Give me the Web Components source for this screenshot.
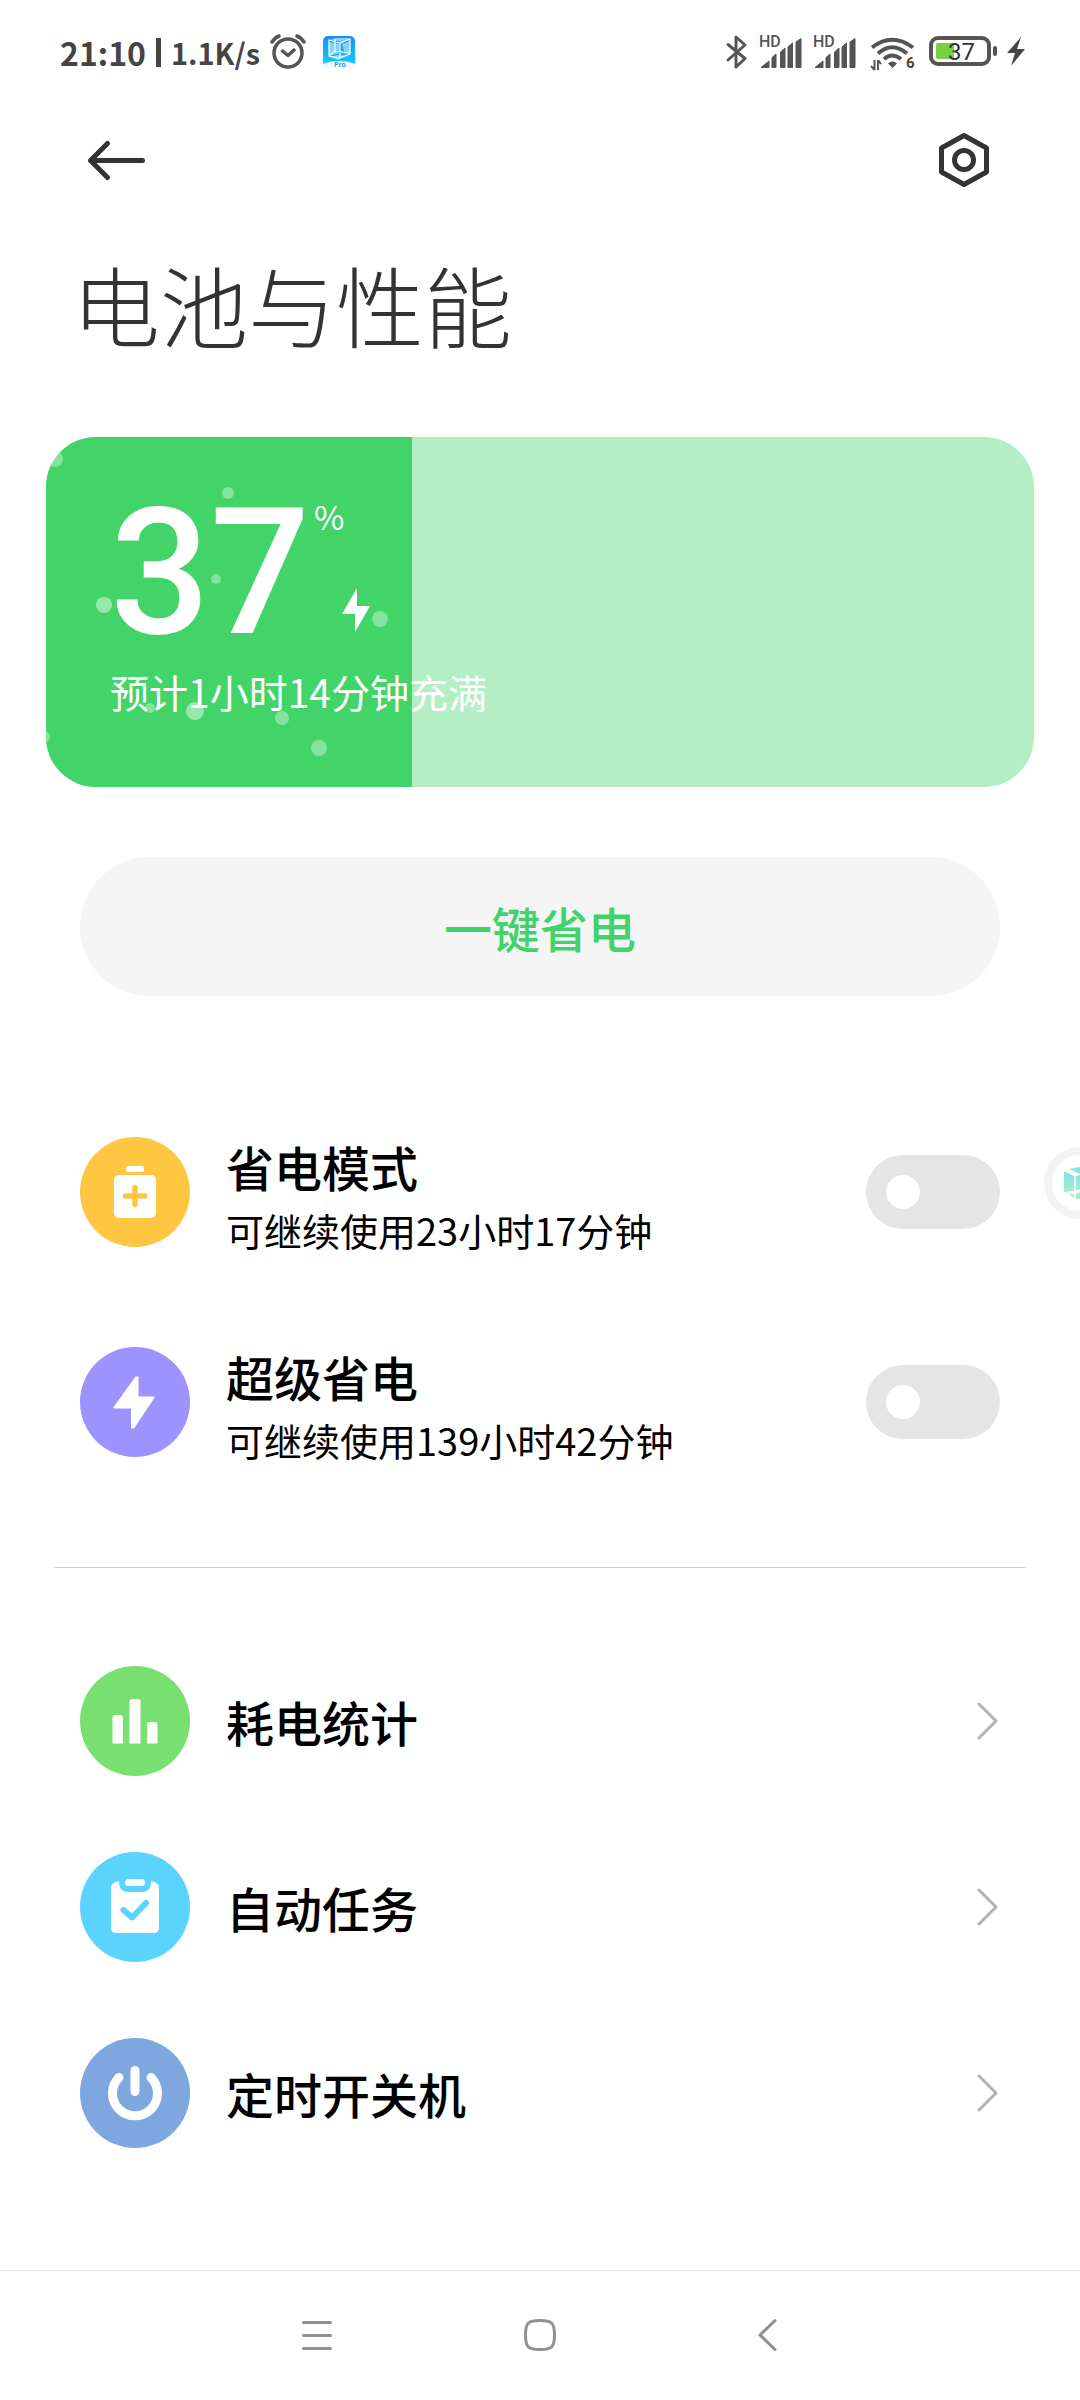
<!DOCTYPE html>
<html lang="zh-CN">
<head>
<meta charset="utf-8">
<meta name="viewport" content="width=device-width, initial-scale=1">
<title>电池与性能</title>
<style>
  html, body { margin: 0; background: #fff; }
  body { font-family: "Noto Sans CJK SC", "Noto Sans", sans-serif; color: #000; }
</style>
</head>
<body>
<battery-page>
  <status-bar slot="status"></status-bar>
  <page-header slot="header">电池与性能</page-header>
  <battery-card level="37">预计1小时14分钟充满</battery-card>
  <power-button>一键省电</power-button>
  <item-group label="省电">
    <switch-row color="#ffc642" icon="battery">省电模式<span slot="note">可继续使用23小时17分钟</span></switch-row>
    <switch-row color="#9d93ff" icon="bolt">超级省电<span slot="note">可继续使用139小时42分钟</span></switch-row>
  </item-group>
  <item-group label="更多" divided>
    <link-row color="#78e070" icon="chart">耗电统计</link-row>
    <link-row color="#5ad3ff" icon="task">自动任务</link-row>
    <link-row color="#7ea6df" icon="power">定时开关机</link-row>
  </item-group>
  <nav-bar slot="nav"></nav-bar>
  <floating-bubble slot="float"></floating-bubble>
</battery-page>

<script>
const define = (name, render) => customElements.define(name, class extends HTMLElement {
  connectedCallback() {
    if (this.shadowRoot) return;
    const template = document.createElement('template');
    template.innerHTML = render(this);
    this.attachShadow({ mode: 'open' }).append(template.content.cloneNode(true));
  }
});

const ICONS = {
  battery: `<rect x="46" y="29" width="18" height="6" rx="2" fill="#fff"/>
    <rect x="34" y="38" width="42" height="43" rx="5" fill="#fff"/>
    <path d="M55 50.500v17M45.500 59h19" stroke="currentColor" stroke-width="5.500" stroke-linecap="round"/>`,
  bolt: `<path d="M57.500 30.500V50.500H73.500L53.500 80.500H52V60.500H34.500L56 30.500Z" fill="#fff" stroke="#fff" stroke-width="2" stroke-linejoin="round"/>`,
  chart: `<path d="M32.500 77.500V52a3 3 0 0 1 3-3h4.500a3 3 0 0 1 3 3v25.500ZM49.500 77.500V36a3 3 0 0 1 3-3h5a3 3 0 0 1 3 3v41.500ZM67 77.500V59a3 3 0 0 1 3-3h4.500a3 3 0 0 1 3 3v18.500Z" fill="#fff"/>`,
  task: `<path d="M39 29.500C39 36 42 40 48 40H62C68 40 71 36 71 29.500C76 29.500 79 32 79 36V76Q79 81 74 81H36Q31 81 31 76V36C31 32 34 29.500 39 29.500Z" fill="#fff"/>
    <rect x="45" y="27" width="20" height="7" rx="3.500" fill="#fff"/>
    <path d="M43.500 58L52 65.500L66 51" fill="none" stroke="currentColor" stroke-width="6" stroke-linecap="round" stroke-linejoin="round"/>`,
  power: `<path d="M39 39.500A22.500 22.500 0 1 0 71 39.500" fill="none" stroke="#fff" stroke-width="9" stroke-linecap="round"/>
    <path d="M55 32.500V53.500" stroke="#fff" stroke-width="9" stroke-linecap="round"/>`
};

define('battery-page', () => `
  <style>
    :host { display: flex; flex-direction: column; min-height: 100vh; position: relative; overflow: hidden; }
    main { flex: 1; display: flex; flex-direction: column; }
  </style>
  <slot name="status"></slot>
  <slot name="header"></slot>
  <main><slot></slot></main>
  <slot name="nav"></slot>
  <slot name="float"></slot>`);

const signal = `<svg width="46" height="40" viewBox="0 0 46 40">
  <text x="0" y="15" class="hd">HD</text>
  <path d="M2 35.500L10 29V35.500ZM13 35.500V25.500L17 22V35.500ZM21.500 35.500V20L26 16V35.500ZM29 35.500V15L33.500 11V35.500ZM37 35.500V10L42 6.500V35.500Z" fill="#555" stroke="#555" stroke-linejoin="round"/></svg>`;

define('status-bar', () => `
  <style>
    :host { display: flex; justify-content: space-between; align-items: center; height: 104px; padding: 0 54px 0 60px; color: #444; font-size: 32px; line-height: 40px; font-weight: 700; }
    div { display: flex; align-items: center; }
    .left { gap: 10px; }
    .right { gap: 8px; }
    .bar { width: 5px; height: 29px; background: #444; }
    .speed { font-size: 29px; }
    .app { margin-left: 6px; }
    svg { display: block; }
    .hd { font: 500 16px Roboto, sans-serif; fill: #555; }
    .six { font: 700 15px Roboto, sans-serif; fill: #444; }
    .num { font: 400 24px Roboto, sans-serif; fill: #333; }
    .pro { font: 700 7px "Open Sans", sans-serif; fill: #2a9cf0; }
  </style>
  <div class="left">
    <time>21:10</time><span class="bar"></span><span class="speed">1.1K/s</span>
    <svg width="36" height="40" viewBox="0 0 36 40" fill="none" stroke="#555" stroke-width="3.500" stroke-linecap="round" stroke-linejoin="round">
      <circle cx="18" cy="21" r="14"/><path d="M12.500 19L18 23.500L24 18M2 10Q5 5.500 9 4M27 4Q31 5.500 34 10"/></svg>
    <svg class="app" width="34" height="34" viewBox="0 0 34 34">
      <defs><linearGradient id="sky" x2="0" y2="1"><stop stop-color="#168cf8"/><stop offset="1" stop-color="#16d6fa"/></linearGradient>
      <clipPath id="tile"><rect x="1" y="1" width="32" height="32" rx="5"/></clipPath></defs>
      <g clip-path="url(#tile)"><rect width="34" height="34" fill="url(#sky)"/>
      <path d="M8 5L14 3H26L28 5L20 7ZM7 7L17 9V18L7 21ZM20 9L28 6V18L23 19ZM8 22L16 20L25 21L16 25Z" fill="#cdf3ff" opacity=".6"/>
      <path d="M7 5L18 8L28 4V19L17 23L7 21ZM18 8V22M13 4V16L8 20M13 16L27 18" fill="none" stroke="#fff" stroke-width="1.200"/>
      <ellipse cx="17" cy="33" rx="19" ry="7" fill="#f2fbff"/></g><text class="pro" x="12" y="32">Pro</text></svg>
  </div>
  <div class="right">
    <svg width="26" height="40" viewBox="0 0 26 40" fill="none" stroke="#555" stroke-width="3" stroke-linejoin="round" stroke-linecap="round"><path d="M3 12.500L20 26.500L11 35V5L20 13L3 28"/></svg>
    ${signal}${signal}
    <svg width="54" height="40" viewBox="0 0 54 40">
      <g fill="none" stroke="#555" stroke-width="4"><path d="M5 15.500Q25 0 46 15.500M11 21.500Q25 9 40 21.500M17 27Q25 20 34 27"/></g>
      <path d="M21 31.500Q25.500 27.500 30 31.500L25.500 36Z" fill="#555"/>
      <path d="M7.500 38V28M4 34L7.500 38M11 28V38M14 32L11 28" fill="none" stroke="#555" stroke-width="2"/>
      <text class="six" x="39" y="36">6</text></svg>
    <svg width="69" height="40" viewBox="0 0 69 40">
      <rect x="2" y="6" width="58" height="26" rx="7" fill="none" stroke="#555" stroke-width="4"/>
      <rect x="7" y="11" width="18" height="16" rx="2" fill="#79d142"/><rect x="64" y="14" width="4" height="10" rx="2" fill="#555"/>
      <text class="num" x="19" y="28">37</text></svg>
    <svg width="20" height="40" viewBox="0 0 20 40"><path d="M15 5L1 21H9L5 34L19 17H11Z" fill="#444"/></svg>
  </div>`);

define('page-header', () => `
  <style>
    :host { display: block; color: #333; }
    div { display: flex; justify-content: space-between; height: 112px; padding: 0 80px; align-items: center; }
    button { border: 0; padding: 0; background: none; color: inherit; display: block; }
    svg { display: block; }
    h1 { margin: 0 72px; padding: 23px 0 65px; font-weight: 300; font-size: 88px; line-height: 128px; }
  </style>
  <div>
    <button aria-label="返回"><svg width="72" height="72" viewBox="0 0 72 72" fill="none" stroke="currentColor" stroke-width="5" stroke-linecap="round" stroke-linejoin="round"><path d="M62.500 36.500H10.500M27.500 19.500L10.500 36.500L27.500 53.500"/></svg></button>
    <button aria-label="设置"><svg width="72" height="72" viewBox="0 0 72 72" fill="none" stroke="currentColor" stroke-width="5" stroke-linejoin="round"><path d="M36 11.500L58.500 24V48L36 60.500L13.500 48V24Z"/><circle cx="36" cy="36" r="9.500"/></svg></button>
  </div>
  <h1><slot></slot></h1>`);

define('battery-card', el => `
  <style>
    :host { display: block; position: relative; box-sizing: border-box; height: 350px; margin: 5px 46px 0; padding: 0 64px; border-radius: 50px; background: #b3eec5; color: #fff; overflow: hidden; }
    .fill { position: absolute; inset: 0 auto 0 0; width: ${el.getAttribute('level')}%; background: #42d469; overflow: hidden; }
    .fill svg { display: block; }
    .content { position: relative; }
    .level { display: flex; padding-top: 36px; height: 190px; }
    strong { font: 500 176px/200px Roboto, sans-serif; }
    .side { display: flex; flex-direction: column; justify-content: space-between; margin-left: 4px; padding: 18px 0 31px; box-sizing: border-box; }
    .side span { font-size: 33px; line-height: 50px; }
    .side svg { display: block; margin-left: 28px; }
    p { margin: 0; font-size: 39px; line-height: 56px; }
  </style>
  <div class="fill"><svg width="366" height="350" viewBox="0 0 366 350" fill="#fff">
    <g opacity=".35"><circle cx="9" cy="22" r="8"/><circle cx="182" cy="56" r="6"/><circle cx="170" cy="142" r="5"/><circle cx="334" cy="182" r="8"/><circle cx="104" cy="271" r="5"/><circle cx="236" cy="281" r="7"/><circle cx="273" cy="311" r="8"/><circle cx="-2" cy="300" r="6"/></g>
    <g opacity=".45"><circle cx="58" cy="168" r="8"/><circle cx="149" cy="274" r="9"/></g></svg></div>
  <div class="content">
    <div class="level"><strong>${el.getAttribute('level')}</strong>
      <div class="side"><span>%</span>
        <svg width="28" height="44" viewBox="0 0 28 44"><path d="M15 0V18H28L13 44V26H0Z" fill="#fff"/></svg></div></div>
    <p><slot></slot></p>
  </div>`);

define('power-button', () => `
  <style>
    :host { display: block; margin: 70px 80px 91px; }
    button { display: block; width: 100%; height: 139px; border: 0; border-radius: 70px; background: #f5f5f5; color: #42d26b; font: inherit; font-size: 48px; font-weight: 500; }
  </style>
  <button><slot></slot></button>`);

define('item-group', el => `
  <style>
    :host { display: block; padding: 0 54px; }
    hr { border: 0; height: 1px; margin: 60px 0; background: #d0d0d0; }
    section { padding: 0 26px; }
  </style>
  ${el.hasAttribute('divided') ? '<hr>' : ''}
  <section aria-label="${el.getAttribute('label')}"><slot></slot></section>`);

define('round-icon', el => `
  <style>
    :host { display: block; flex: none; width: 110px; height: 110px; border-radius: 50%; background: currentColor; }
    svg { display: block; }
  </style>
  <svg width="110" height="110" viewBox="0 0 110 110">${ICONS[el.getAttribute('name')]}</svg>`);

const rowIcon = el => `<round-icon name="${el.getAttribute('icon')}" style="color:${el.getAttribute('color')}"></round-icon>`;

define('switch-row', el => `
  <style>
    :host { display: flex; align-items: center; height: 210px; gap: 36px; }
    label { flex: 1; display: flex; flex-direction: column; }
    .name { font-size: 48px; line-height: 76px; font-weight: 500; }
    .note { font-size: 38px; line-height: 52px; }
    input { appearance: none; flex: none; margin: 0; width: 134px; height: 74px; border-radius: 37px; background: #e5e5e5; padding: 20px; }
    input::before { content: ""; display: block; width: 34px; height: 34px; border-radius: 50%; background: #fff; }
    input:checked { background: #42d469; }
    input:checked::before { margin-left: auto; }
  </style>
  ${rowIcon(el)}
  <label for="toggle"><span class="name"><slot></slot></span><span class="note"><slot name="note"></slot></span></label>
  <input id="toggle" type="checkbox" role="switch">`);

define('link-row', el => `
  <style>
    :host { display: block; }
    a { display: flex; align-items: center; height: 186px; gap: 36px; color: inherit; text-decoration: none; }
    .name { flex: 1; font-size: 48px; font-weight: 500; line-height: 76px; }
  </style>
  <a href="#${el.getAttribute('icon')}">${rowIcon(el)}<span class="name"><slot></slot></span>
    <svg width="24" height="40" viewBox="0 0 24 40" fill="none" stroke="#b2b2b2" stroke-width="3" stroke-linecap="round" stroke-linejoin="round"><path d="M3 3L20 20L3 37"/></svg></a>`);

define('nav-bar', () => `
  <style>
    :host { display: flex; justify-content: center; align-items: center; height: 129px; border-top: 1px solid #e3e3e3; background: #fff; }
    nav { display: flex; gap: 150px; }
    button { display: block; border: 0; padding: 0; background: none; color: #909090; }
    svg { display: block; }
  </style>
  <nav>
    <button aria-label="最近任务"><svg width="76" height="40" viewBox="0 0 76 40" stroke="currentColor" stroke-width="3" stroke-linecap="round"><path d="M27.500 6.500H54.500M27.500 19.500H54.500M27.500 32.500H54.500"/></svg></button>
    <button aria-label="主页"><svg width="76" height="40" viewBox="0 0 76 40" fill="none" stroke="currentColor" stroke-width="3"><path d="M38 4.500C50 4.500 52.500 7 52.500 19S50 33.500 38 33.500S23.500 31 23.500 19S26 4.500 38 4.500Z"/></svg></button>
    <button aria-label="返回"><svg width="76" height="40" viewBox="0 0 76 40" fill="none" stroke="currentColor" stroke-width="3" stroke-linecap="round" stroke-linejoin="round"><path d="M47 4.500L32 19L47 33.500"/></svg></button>
  </nav>`);

define('floating-bubble', () => `
  <style>
    :host { position: absolute; top: 1147px; right: -36px; box-sizing: border-box; width: 72px; height: 72px; border-radius: 50%; border: 8px solid #f3f3f3; background: #fff; }
    svg { display: block; }
  </style>
  <svg width="56" height="56" viewBox="0 0 56 56"><defs><linearGradient id="mint" x2="0" y2="1"><stop offset=".2" stop-color="#82e4e2"/><stop offset=".9" stop-color="#a5f0c8"/></linearGradient></defs>
    <path d="M12 16.500L22 21V36L12 37ZM17 14L28 12L39 14L28 19ZM24 21L28 20L33 22V34L24 35ZM17 39H22V43ZM24 38L33 37V44H24Z" fill="url(#mint)"/></svg>`);
</script>
</body>
</html>
